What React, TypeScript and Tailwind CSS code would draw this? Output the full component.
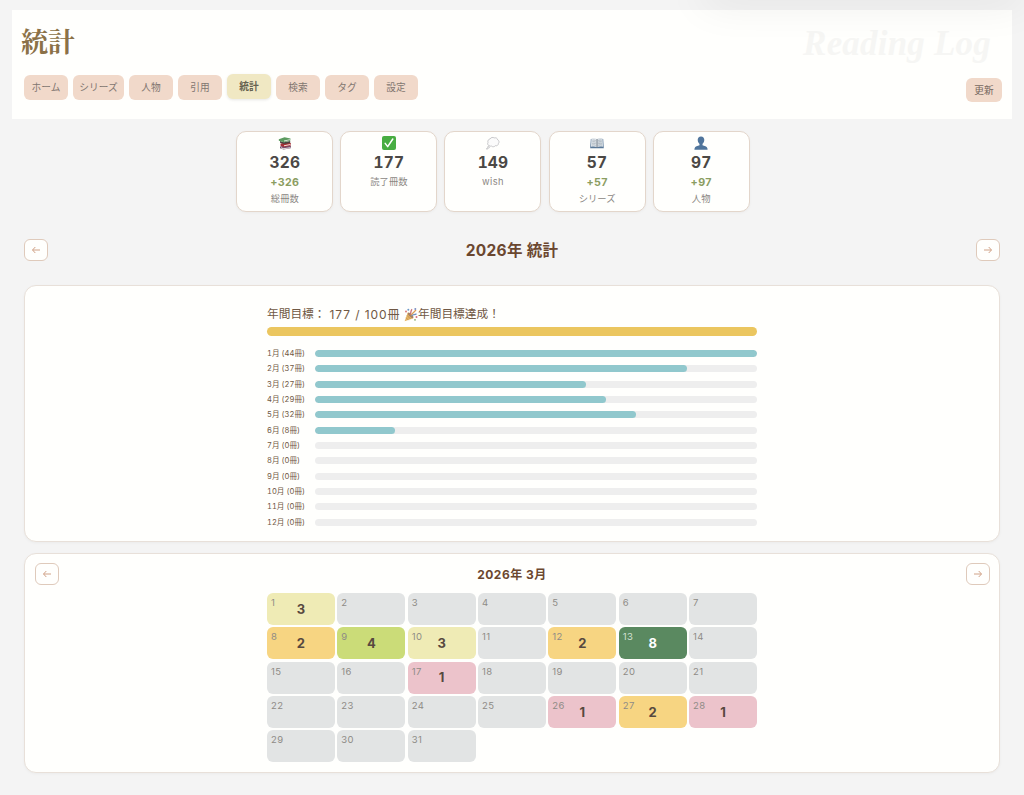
import React from 'react';
import clsx from 'clsx';

const navItems = ['ホーム', 'シリーズ', '人物', '引用', '統計', '検索', 'タグ', '設定'];

const months = [44, 37, 27, 29, 32, 8, 0, 0, 0, 0, 0, 0];
const maxMonth = 44;

const counts: Record<number, number> = {
  1: 3, 8: 2, 9: 4, 10: 3, 12: 2, 13: 8, 17: 1, 26: 1, 27: 2, 28: 1,
};

const levelClass: Record<number, string> = {
  0: 'bg-[#e2e4e4]',
  1: 'bg-[#ecc3cb]',
  2: 'bg-[#f7d582]',
  3: 'bg-[#efebb5]',
  4: 'bg-[#cbdc78]',
  8: 'bg-[#5a8960]',
};

function BooksIcon() {
  return (
    <svg width="14" height="14" viewBox="0 0 14 14">
      <path d="M2 10.500 10 9l3 1-.3 2.200-7.300 1.300L2 12.300z" fill="#76506f" />
      <path d="m3 11.300 2.500 1 6.900-1.100v.9l-6.900 1.100-2.500-1z" fill="#e9e3df" />
      <path d="M2.500 7.500 11 6l2 1.500-.4 2.300-6.600 1.300L2.500 9.700z" fill="#a52f35" />
      <path d="m6 9.300 6.500-1.300v1L6 10.300z" fill="#f1e2d8" />
      <path d="M2 5 6 6.200l6.200-1.300v2L6 8.100 2 6.800z" fill="#4a4540" />
      <path d="M.8 3.200 6.500 1.200l6 1.300-.3 2.300L6 6.300.8 4.800z" fill="#5b9a5f" />
      <path d="m6 4.400 6-1.200v.9L6 5.400z" fill="#dfeadb" />
    </svg>
  );
}

function CheckIcon() {
  return (
    <svg width="14" height="14" viewBox="0 0 14 14">
      <rect width="14" height="14" rx="2" fill="#48ad42" />
      <path d="m3.200 7.400 2.500 3.200L10.800 3" fill="none" stroke="#fff" strokeWidth="1.500" strokeLinecap="round" strokeLinejoin="round" />
    </svg>
  );
}

function ThoughtIcon() {
  return (
    <svg width="14" height="14" viewBox="0 0 14 14" fill="#fbfbfb" stroke="#b2b2b6" strokeWidth=".7">
      <path d="M3.500 9.700C1.700 9.400 1.200 7.700 2 6.500 1.300 4.700 2.500 3.200 4 3 4.800 1.300 7 1 8.200 1.900c1.700-.5 3.300.4 3.500 1.900 1.500.7 1.700 2.700.7 3.700 0 1.600-1.600 2.700-3 2.200-1.200 1.400-3 1.300-3.800.4-.8.300-1.600.1-2.100-.4z" />
      <circle cx="2.500" cy="11.200" r=".9" />
      <circle cx="1" cy="12.800" r=".5" />
    </svg>
  );
}

function OpenBookIcon() {
  return (
    <svg width="14" height="14" viewBox="0 0 14 14">
      <path d="M.8 3h12.400l.6 9.200H.2z" fill="#587797" />
      <path d="M1.400 2.600C3 1.800 5.500 2 7 3v8.200c-1.700-1-4.200-1-6-.4z" fill="#e4e9ed" />
      <path d="M12.600 2.600C11 1.800 8.500 2 7 3v8.200c1.700-1 4.200-1 6-.4z" fill="#d9e0e6" />
      <path d="M2.300 4.200q1.700-.5 3.500.3M2.200 5.800q1.800-.5 3.600.3M2.100 7.400q1.900-.5 3.700.3M2 9q2-.5 3.800.3M8.200 4.500q2-.8 3.500-.3M8.200 6.100q2-.8 3.600-.3M8.200 7.700q2-.8 3.700-.3M8.200 9.300q2-.8 3.800-.3" stroke="#929da8" strokeWidth=".6" fill="none" />
      <path d="M7 3v8.500" stroke="#56636f" strokeWidth=".8" />
    </svg>
  );
}

function PersonIcon() {
  return (
    <svg width="14" height="14" viewBox="0 0 14 14" fill="#50759c">
      <path d="M7 .4c2.100 0 3.400 1.500 3.300 3.600C10.200 6.300 8.800 8.500 7 8.500S3.800 6.300 3.700 4C3.600 1.900 4.900.4 7 .4z" />
      <path d="M5.500 7.500h3v1.700c1.800.6 4.500.9 4.900 3.100l.2 1.400H.4l.2-1.400c.4-2.200 3.100-2.500 4.900-3.100z" />
    </svg>
  );
}

function PartyIcon() {
  return (
    <svg width="14" height="14" viewBox="0 0 14 14" className="shrink-0">
      <path d="M3.800 4.500.6 13.300 9.300 10.200z" fill="#e5b563" />
      <path d="m2.900 7.300 3.800 3.800M2 9.700l2.500 2.500" stroke="#bd8650" strokeWidth=".7" />
      <ellipse cx="6.600" cy="7.300" rx="3.700" ry="1.400" transform="rotate(45 6.600 7.300)" fill="#a9825f" />
      <path d="M6 6.500C7.500 5 6.200 3.200 8 1.200" stroke="#c9707a" strokeWidth="1.300" fill="none" />
      <path d="M7.500 7.800c1.500-2 3-.5 5-2" stroke="#6c8fc0" strokeWidth="1.300" fill="none" />
      <path d="M7 7 12 2" stroke="#d99d55" strokeWidth="1.200" />
      <circle cx="4.300" cy="1.800" r="1" fill="#6d99c8" />
      <circle cx="11.300" cy="1" r="1" fill="#7c8fc4" />
      <circle cx="2" cy="3.500" r="1" fill="#d97d7d" />
      <circle cx="12.500" cy="9" r="1" fill="#d66f80" />
      <circle cx="11" cy="11.800" r=".9" fill="#88a868" />
    </svg>
  );
}

const stats = [
  { icon: <BooksIcon />, value: 326, diff: '+326', label: '総冊数' },
  { icon: <CheckIcon />, value: 177, label: '読了冊数' },
  { icon: <ThoughtIcon />, value: 149, label: 'wish' },
  { icon: <OpenBookIcon />, value: 57, diff: '+57', label: 'シリーズ' },
  { icon: <PersonIcon />, value: 97, diff: '+97', label: '人物' },
];

function ArrowButton({ dir }: { dir: 'left' | 'right' }) {
  return (
    <button className="flex h-[22px] w-6 items-center justify-center rounded-[6px] border border-[#dfcabb] bg-[#fffffd]">
      <svg width="8" height="8" viewBox="0 0 8 8" fill="none" stroke="#d0a287" strokeWidth="1" className={clsx(dir === 'right' && 'rotate-180')}>
        <path d="M8 4H.6M3.300 1 .5 4l2.800 3" />
      </svg>
    </button>
  );
}

function Header() {
  return (
    <header className="relative mx-3 h-[109px] bg-[#fffffd]">
      <h1 className="pt-[11px] pl-[9px] font-['Noto_Serif_CJK_JP','Noto_Sans_CJK_JP',serif] text-[27px] leading-[40px] font-bold text-[#8b7147]">
        統計
      </h1>
      <div className="absolute top-[14px] right-[21px] font-['Liberation_Serif',serif] text-[35px] leading-[40px] font-bold tracking-[0.2px] text-[#f6f6f4] italic">
        Reading Log
      </div>
      <div className="mt-[14px] flex items-start justify-between pr-[10px] pl-3">
        <nav className="flex gap-[5px]">
          {navItems.map((item) => (
            <button
              key={item}
              className={clsx(
                'h-[25px] rounded-[6px] text-[9.7px] leading-[25px]',
                item === 'シリーズ' ? 'w-[51px]' : 'w-11',
                item === '統計'
                  ? '-translate-y-px bg-[#f0e8c3] font-bold text-[#65614f] shadow-[0_1px_3px_rgba(0,0,0,0.1)]'
                  : 'bg-[#f1d9ca] text-[#817670]'
              )}
            >
              {item}
            </button>
          ))}
        </nav>
        <button className="mt-[3px] h-6 w-[36px] rounded-[6px] bg-[#f1d9ca] text-[9.7px] leading-[25px] text-[#76685f]">更新</button>
      </div>
    </header>
  );
}

function Calendar() {
  return (
    <div className="mx-auto mt-2 grid w-[490px] grid-cols-7 gap-x-[2.4px] gap-y-[2.3px]">
      {Array.from({ length: 31 }, (_, i) => i + 1).map((day) => {
        const count = counts[day] ?? 0;
        return (
          <div
            key={day}
            className={clsx(
              'relative flex h-8 items-center justify-center rounded-[6px] pt-px text-[13px] font-bold',
              levelClass[count],
              count === 8 ? 'text-white' : 'text-[#57493f]'
            )}
          >
            <span
              className={clsx(
                'absolute top-[4px] left-[4px] text-[9.5px] leading-3 font-normal tracking-[0.4px]',
                count === 8 ? 'text-[#d3e0d4]' : 'text-[#8e8b86]'
              )}
            >
              {day}
            </span>
            {count > 0 && count}
          </div>
        );
      })}
    </div>
  );
}

export default function App() {
  return (
    <div className="relative h-[795px] overflow-hidden bg-[#f4f4f4] pt-[10px] font-['Inter','Noto_Sans_CJK_JP',sans-serif]">
      <Header />

      <section className="mt-3 ml-[236.3px] flex gap-[7.1px]">
        {stats.map((s) => (
          <div
            key={s.label}
            className="flex h-[81px] w-[97px] flex-col items-center rounded-[10px] border border-[#e3d6cb] bg-[#fffffd] pt-[4px] shadow-[0_1px_3px_rgba(0,0,0,0.04)]"
          >
            {s.icon}
            <div className="mt-[3px] text-[15.5px] leading-[19px] font-bold tracking-[0.2px] text-[#4b4845] tabular-nums">{s.value}</div>
            {s.diff && <div className="mt-[3px] text-[10.7px] leading-[15px] font-bold tracking-[0.3px] text-[#8b9d61]">{s.diff}</div>}
            <div className={clsx('text-[9.3px] leading-[15px] text-[#8b8783]', s.diff ? 'mt-px' : 'mt-[2px]', s.label === 'wish' && 'tracking-[0.4px]')}>
              {s.label}
            </div>
          </div>
        ))}
      </section>

      <div className="mx-6 mt-[27px] flex items-center justify-between">
        <ArrowButton dir="left" />
        <h2 className="pt-[2px] text-[15.5px] leading-[20px] font-bold tracking-[0.3px] text-[#6b472f]">2026年 統計</h2>
        <ArrowButton dir="right" />
      </div>

      <section className="mx-6 mt-6 h-[257px] rounded-xl border border-[#e8e0d9] bg-[#fffffd] pt-[19px] shadow-[0_1px_3px_rgba(0,0,0,0.04)]">
        <div className="mx-auto w-[490px] text-[#705844]">
          <div className="flex h-5 items-center text-[11.7px] whitespace-pre">
            <span className="w-[62.500px]">年間目標： </span>
            <span className="w-[74.500px] text-[12px] tracking-[0.9px]">177 / 100冊 </span>
            <PartyIcon />
            <span>年間目標達成！</span>
          </div>
          <div className="mt-[2px] h-[9px] rounded-full bg-[#ebc65f]" />
          <div className="mt-[10px]">
            {months.map((n, i) => (
              <div key={i} className="flex h-[15.32px] items-center">
                <div className="w-12 pt-px text-[7.6px] leading-[14px] whitespace-nowrap tabular-nums">
                  {i + 1}月 ({n}冊)
                </div>
                <div className="h-[7px] flex-1 overflow-hidden rounded-full bg-[#eeeeee]">
                  <div className="h-full rounded-full bg-[#91c8cd]" style={{ width: `${(n / maxMonth) * 100}%` }} />
                </div>
              </div>
            ))}
          </div>
        </div>
      </section>

      <section className="mx-6 mt-[11px] h-[220px] rounded-xl border border-[#e8e0d9] bg-[#fffffd] pt-[9px] shadow-[0_1px_3px_rgba(0,0,0,0.04)]">
        <div className="mx-[9.500px] flex items-center justify-between">
          <ArrowButton dir="left" />
          <h3 className="pt-px text-[12px] leading-[21px] font-bold tracking-[0.5px] text-[#6b472f]">2026年 3月</h3>
          <ArrowButton dir="right" />
        </div>
        <Calendar />
      </section>

      {/* soft shadow falling in from above the top right corner */}
      <div className="pointer-events-none absolute -top-[24px] right-0 h-5 w-[320px] shadow-[0_4px_44px_rgba(0,0,0,0.11)]" />
    </div>
  );
}
